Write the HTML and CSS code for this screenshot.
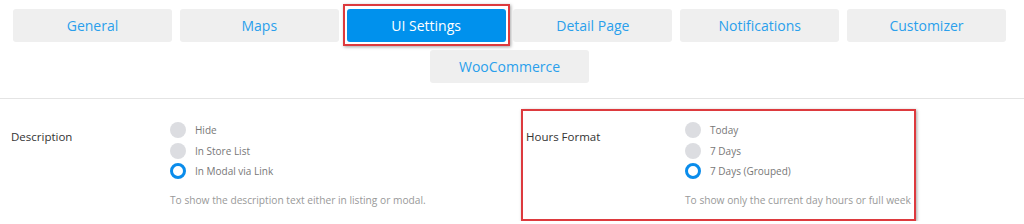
FILE: index.html
```html
<!DOCTYPE html>
<html lang="en">
<head>
    <meta charset="UTF-8">
    <title>UI Settings</title>
    <link rel="stylesheet" href="styles.css">
</head>
<body>
    <nav class="tabs">
        <button class="tab">General</button>
        <button class="tab">Maps</button>
        <button class="tab active highlight">UI Settings</button>
        <button class="tab">Detail Page</button>
        <button class="tab">Notifications</button>
        <button class="tab">Customizer</button>
        <button class="tab">WooCommerce</button>
    </nav>

    <div class="settings">
        <div class="field">
            <div class="field-label">Description</div>
            <div class="field-body">
                <label class="radio"><span class="dot"></span>Hide</label>
                <label class="radio"><span class="dot"></span>In Store List</label>
                <label class="radio"><span class="dot checked"></span>In Modal via Link</label>
                <p class="help">To show the description text either in listing or modal.</p>
            </div>
        </div>

        <div class="field boxed">
            <div class="field-label">Hours Format</div>
            <div class="field-body">
                <label class="radio"><span class="dot"></span>Today</label>
                <label class="radio"><span class="dot"></span>7 Days</label>
                <label class="radio"><span class="dot checked"></span>7 Days (Grouped)</label>
                <p class="help">To show only the current day hours or full week</p>
            </div>
        </div>
    </div>
</body>
</html>
```

FILE: styles.css
```css
body {
    margin: 0;
    background-color: #fff;
    font-family: 'Open Sans', 'Noto Sans', sans-serif;
}

.tabs {
    display: flex;
    flex-wrap: wrap;
    justify-content: center;
    gap: 8px 7.8px;
    padding: 9px 18px 15px 13px;
    border-bottom: 1px solid #e4e4e4;
}

.tab {
    position: relative;
    width: 159px;
    height: 33px;
    border: none;
    border-radius: 3px;
    background-color: #efefef;
    color: #2a9fec;
    font-family: inherit;
    font-size: 14px;
    padding: 0;
}

.tab.active {
    background-color: #0091ed;
    color: #fff;
}

/* cornice rossa di evidenziazione */
.highlight::after {
    content: '';
    position: absolute;
    top: -5px;
    left: -4px;
    right: -4px;
    bottom: -4px;
    border: 2px solid #dd3a3e;
    box-shadow: 1px 1px 3px rgba(0, 0, 0, 0.35);
}

.settings {
    display: flex;
    padding: 10px 0 0 6px;
}

.field {
    display: flex;
    width: 515px;
    border: 2px solid transparent;
    padding: 9px 3px 11px 3px;
    box-sizing: border-box;
}

.field.boxed {
    width: 395px;
    border-color: #dd3a3e;
    box-shadow: 1px 1px 3px rgba(0, 0, 0, 0.35);
}

.field-label {
    width: 159px;
    flex-shrink: 0;
    margin-top: 7px;
    font-size: 11.5px;
    line-height: 20px;
    color: #333;
}

.field-body {
    display: flex;
    flex-direction: column;
    white-space: nowrap;
}

.radio {
    display: flex;
    align-items: center;
    height: 20.5px;
    font-size: 10px;
    color: #777;
}

.dot {
    width: 16px;
    height: 16px;
    border-radius: 50%;
    background-color: #dcdde1;
    margin-right: 9px;
    box-sizing: border-box;
}

.dot.checked {
    background-color: #fff;
    border: 3.5px solid #0a8ceb;
}

.help {
    margin: 10px 0 0;
    font-size: 10.2px;
    line-height: 16px;
    color: #999;
}
```
